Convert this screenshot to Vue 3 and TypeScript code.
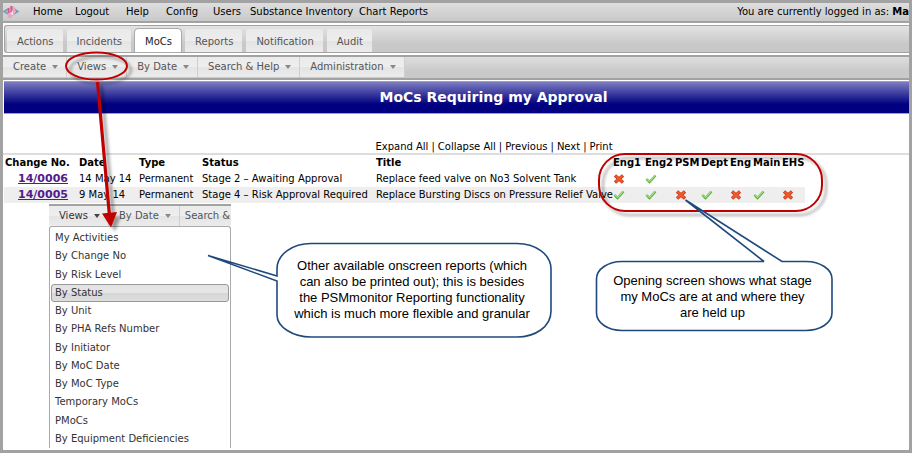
<script setup lang="ts">
interface MocRow {
  id: string
  date: string
  type: string
  status: string
  title: string
  marks: string[]
}

const links: string[] = ['Home', 'Logout', 'Help', 'Config', 'Users', 'Substance Inventory', 'Chart Reports']
const tabs: string[] = ['Actions', 'Incidents', 'MoCs', 'Reports', 'Notification', 'Audit']
const menus: string[] = ['Create', 'Views', 'By Date', 'Search & Help', 'Administration']
const actions: string[] = ['Expand All', 'Collapse All', 'Previous', 'Next', 'Print']
const columns: string[] = ['Change No.', 'Date', 'Type', 'Status', 'Title', 'Eng1', 'Eng2', 'PSM', 'Dept', 'Eng', 'Main', 'EHS']
const rows: MocRow[] = [
  {
    id: '14/0006', date: '14 May 14', type: 'Permanent', status: 'Stage 2 – Awaiting Approval',
    title: 'Replace feed valve on No3 Solvent Tank', marks: ['no', 'yes', '', '', '', '', ''],
  },
  {
    id: '14/0005', date: '9 May 14', type: 'Permanent', status: 'Stage 4 – Risk Approval Required',
    title: 'Replace Bursting Discs on Pressure Relief Valve', marks: ['yes', 'yes', 'no', 'yes', 'no', 'yes', 'no'],
  },
]
const views: string[] = [
  'My Activities', 'By Change No', 'By Risk Level', 'By Status', 'By Unit', 'By PHA Refs Number',
  'By Initiator', 'By MoC Date', 'By MoC Type', 'Temporary MoCs', 'PMoCs', 'By Equipment Deficiencies',
]
</script>

<template>
  <div class="frame">
    <header class="top">
      <svg class="logo" viewBox="0 0 16 14" aria-hidden="true">
        <path d="M5 4 L1 6.500 L5 9 M11 4 L15 6.500 L10 9.500" fill="none" stroke="#6f9db4" stroke-width="1.600" />
        <path d="M4.500 4 L8 0.500 L12.500 3 L12 9 L8 13 L5 13 L4.500 8 Z" fill="#e3a9c0" />
        <path d="M5.500 3 V8 M8.500 1 V9" fill="none" stroke="#d0588a" stroke-width="1.800" />
        <path d="M7 9 L10 5 L10 10 Z" fill="#f7dfe9" />
      </svg>
      <nav class="links">
        <a v-for="link in links" :key="link" href="#">{{ link }}</a>
      </nav>
      <p class="user">You are currently logged in as: <b>Ma</b></p>
    </header>

    <nav class="tabs">
      <button v-for="tab in tabs" :key="tab" type="button" class="tab" :class="{ active: tab === 'MoCs' }">{{ tab }}</button>
    </nav>

    <nav class="menubar">
      <button v-for="menu in menus" :key="menu" type="button" class="menu">{{ menu }}<i class="caret"></i></button>
    </nav>

    <h1 class="banner">MoCs Requiring my Approval</h1>

    <main>
      <div class="actions">
        <template v-for="(action, i) in actions" :key="action">
          <span v-if="i > 0">|</span><a href="#">{{ action }}</a>
        </template>
      </div>
      <table class="list">
        <colgroup>
          <col class="c-id"><col class="c-date"><col class="c-type"><col class="c-status"><col class="c-title">
          <col class="c-eng1"><col class="c-eng2"><col class="c-psm"><col class="c-dept"><col class="c-eng"><col class="c-main"><col class="c-ehs">
        </colgroup>
        <thead>
          <tr><th v-for="column in columns" :key="column" scope="col">{{ column }}</th></tr>
        </thead>
        <tbody>
          <tr v-for="row in rows" :key="row.id">
            <td class="id"><a href="#">{{ row.id }}</a></td>
            <td>{{ row.date }}</td>
            <td>{{ row.type }}</td>
            <td>{{ row.status }}</td>
            <td>{{ row.title }}</td>
            <td v-for="(mark, i) in row.marks" :key="i">
              <svg v-if="mark === 'yes'" class="mark" viewBox="0 0 12 10" aria-hidden="true">
                <path d="M1.500 5 L4.500 8 L10.500 1.500" fill="none" stroke="#55a832" stroke-width="2.400" />
                <path d="M1.500 4.600 L4.500 7.400 L10.300 1.300" fill="none" stroke="#a5e582" stroke-width="1.200" />
              </svg>
              <svg v-else-if="mark === 'no'" class="mark" viewBox="0 0 12 10" aria-hidden="true">
                <path d="M2 1.500 L10 8.500 M10 1.500 L2 8.500" fill="none" stroke="#c5391a" stroke-width="3.400" />
                <path d="M2.500 1.800 L9.500 8 M9.500 1.800 L2.500 8" fill="none" stroke="#f4592c" stroke-width="1.900" />
              </svg>
            </td>
          </tr>
        </tbody>
      </table>
    </main>

    <section class="popup">
      <div class="popup-bar">
        <button type="button" class="menu open">Views<i class="caret"></i></button>
        <button type="button" class="menu">By Date<i class="caret"></i></button>
        <button type="button" class="menu last">Search &amp;</button>
      </div>
      <ul class="popup-list">
        <li v-for="view in views" :key="view" :class="{ selected: view === 'By Status' }"><a href="#">{{ view }}</a></li>
      </ul>
    </section>

    <svg class="notes" width="912" height="453" viewBox="0 0 912 453" aria-hidden="true">
      <defs>
        <filter id="shade" x="-20%" y="-20%" width="150%" height="150%">
          <feDropShadow dx="4" dy="4" stdDeviation="1.500" flood-color="#000" flood-opacity="0.350" />
        </filter>
      </defs>
      <g filter="url(#shade)">
        <ellipse cx="96.500" cy="66" rx="30.500" ry="13.500" fill="none" stroke="#c00000" stroke-width="2" />
        <path d="M97.500 82 L109.500 216" stroke="#c00000" stroke-width="3.200" />
        <path d="M102 213.500 L117 212 L111 227.500 Z" fill="#c00000" />
        <rect x="599" y="154" width="223" height="57" rx="26" fill="none" stroke="#c00000" stroke-width="2" />
      </g>
      <g fill="#fff" stroke="#1f497d" stroke-width="1.600" stroke-linejoin="miter" stroke-miterlimit="2">
        <path d="M277 276 L208 255.500 L277 281 V315 C277 327 293 337 311 337 H517 C535 337 551 327 551 311 V269 C551 254 535 243.500 517 243.500 H311 C293 243.500 277 254 277 269 Z" />
        <path d="M764 261.500 L685.500 200 L782 261.500 H806 C820 261.500 832 269 832 279 V313 C832 323 820 330.500 806 330.500 H622 C608 330.500 596.500 323 596.500 313 V279 C596.500 269 608 261.500 622 261.500 Z" />
      </g>
    </svg>
    <p class="note note-reports">Other available onscreen reports (which<br>can also be printed out); this is besides<br>the PSMmonitor Reporting functionality<br>which is much more flexible and granular</p>
    <p class="note note-stage">Opening screen shows what stage<br>my MoCs are at and where they<br>are held up</p>
  </div>
</template>

<style>
body {
  background: #fff;
}
</style>

<style scoped>
.frame {
  position: relative;
  box-sizing: border-box;
  min-height: 100vh;
  border: 3px solid #a2a2a2;
  overflow: hidden;
  background: #fff;
  color: #000;
  font-family: "DejaVu Sans", sans-serif;
  font-size: 10px;
  line-height: 14px;
}
a {
  color: inherit;
  text-decoration: none;
}
p,
h1,
ul {
  margin: 0;
  padding: 0;
}
button {
  margin: 0;
  border: 0;
  font: inherit;
  color: #555;
  white-space: nowrap;
}
.top {
  display: flex;
  align-items: center;
  height: 18px;
  border-bottom: 2px solid #a2a2a2;
  background: linear-gradient(#dedede, #c9c9c9);
  line-height: 18px;
  white-space: nowrap;
}
.logo {
  flex: none;
  width: 16px;
  height: 14px;
}
.links {
  display: grid;
  grid-template-columns: 42px 51px 40px 47px 37px 109px auto;
  margin-left: 14px;
}
.user {
  margin-left: auto;
}
.tabs {
  display: flex;
  align-items: flex-end;
  gap: 4px;
  height: 26px;
  margin: 2px 0 2px 1px;
  padding-left: 2px;
  border: solid #a2a2a2;
  border-width: 1px 0 1px 1px;
  border-radius: 3px 0 0 3px;
  background: linear-gradient(#e3e3e3, #c8c8c8 70%);
}
.tab {
  height: 23px;
  padding: 2px 9px 0 10px;
  border-radius: 3px 3px 0 0;
  background: linear-gradient(#e9e9e9, #ededed 50%, #e3e3e3 52%, #ececec);
}
.tab.active {
  background: #fff;
  color: #222;
  outline: 1px solid #aaa;
}
.menubar {
  display: flex;
  height: 21px;
  border: solid #a2a2a2;
  border-width: 2px 0;
  background: linear-gradient(#dedede, #c9c9c9 70%);
}
.menu {
  display: flex;
  align-items: center;
  gap: 6px;
  padding: 0 8px 0 10px;
  height: 20px;
  border-right: 1px solid #cfcfcf;
  background: linear-gradient(#ebebeb, #eee 50%, #e4e4e4 52%, #ececec);
}
.menu.open {
  color: #333;
}
.menu.last {
  flex: 1;
  padding: 0 0 0 5px;
  border-right: 0;
}
.caret {
  border: solid transparent;
  border-width: 4px 3px 0;
  border-top-color: #888;
}
.open .caret {
  border-top-color: #444;
}
.banner {
  margin: 1px 0 0 1px;
  padding-left: 74px;
  border: solid #a2a2a2;
  border-width: 1px 0;
  background: linear-gradient(#7c7cc0, #000080 72%);
  color: #fff;
  font-size: 14px;
  line-height: 31px;
  text-align: center;
}
.actions {
  display: flex;
  justify-content: center;
  gap: 3px;
  margin-top: 27px;
  padding-left: 76px;
  border-bottom: 2px solid #ddd;
  line-height: 12px;
  white-space: nowrap;
}
.list {
  width: 801px;
  margin-left: 1px;
  border-collapse: collapse;
  table-layout: fixed;
}
.c-id { width: 75px; }
.c-date { width: 60px; }
.c-type { width: 63px; }
.c-status { width: 174px; }
.c-title { width: 237px; }
.c-eng1 { width: 32px; }
.c-eng2 { width: 30px; }
.c-psm { width: 26px; }
.c-dept { width: 29px; }
.c-eng { width: 23px; }
.c-main { width: 29px; }
.c-ehs { width: 23px; }
.list th,
.list td {
  height: 16px;
  padding: 0;
  line-height: 14px;
  text-align: left;
  white-space: nowrap;
}
.list th:first-child {
  padding-left: 1px;
}
.list tbody tr:nth-child(2) {
  background: #eee;
}
.list .id {
  padding-right: 11px;
  font-size: 11px;
  font-weight: bold;
  text-align: right;
}
.id a {
  color: #551a8b;
  text-decoration: underline;
}
.mark {
  display: block;
  width: 12px;
  height: 10px;
}
.popup {
  position: absolute;
  left: 46px;
  top: 201px;
  width: 182px;
  overflow: hidden;
  background: #fff;
}
.popup-bar {
  display: flex;
  border-top: 2px solid #a2a2a2;
}
.popup-list {
  display: grid;
  grid-auto-rows: 1fr;
  box-sizing: border-box;
  height: 222px;
  padding: 2px 1px 0;
  border: solid #aaa;
  border-width: 1px 1px 0;
  border-radius: 3px 3px 0 0;
  list-style: none;
}
.popup-list li {
  display: flex;
  align-items: center;
  padding-left: 4px;
  color: #333;
}
.popup-list .selected {
  padding-left: 3px;
  border: 1px solid #999;
  border-radius: 3px;
  background: linear-gradient(#e2e2e2, #e6e6e6 50%, #d6d6d6 52%, #dedede);
}
.notes {
  position: absolute;
  left: -3px;
  top: -3px;
  pointer-events: none;
}
.note {
  position: absolute;
  font-family: "Liberation Sans", Arial, sans-serif;
  font-size: 13px;
  line-height: 16px;
  text-align: center;
  white-space: nowrap;
}
.note-reports {
  left: 274px;
  top: 255px;
  width: 270px;
}
.note-stage {
  left: 593px;
  top: 270px;
  width: 233px;
}
</style>
